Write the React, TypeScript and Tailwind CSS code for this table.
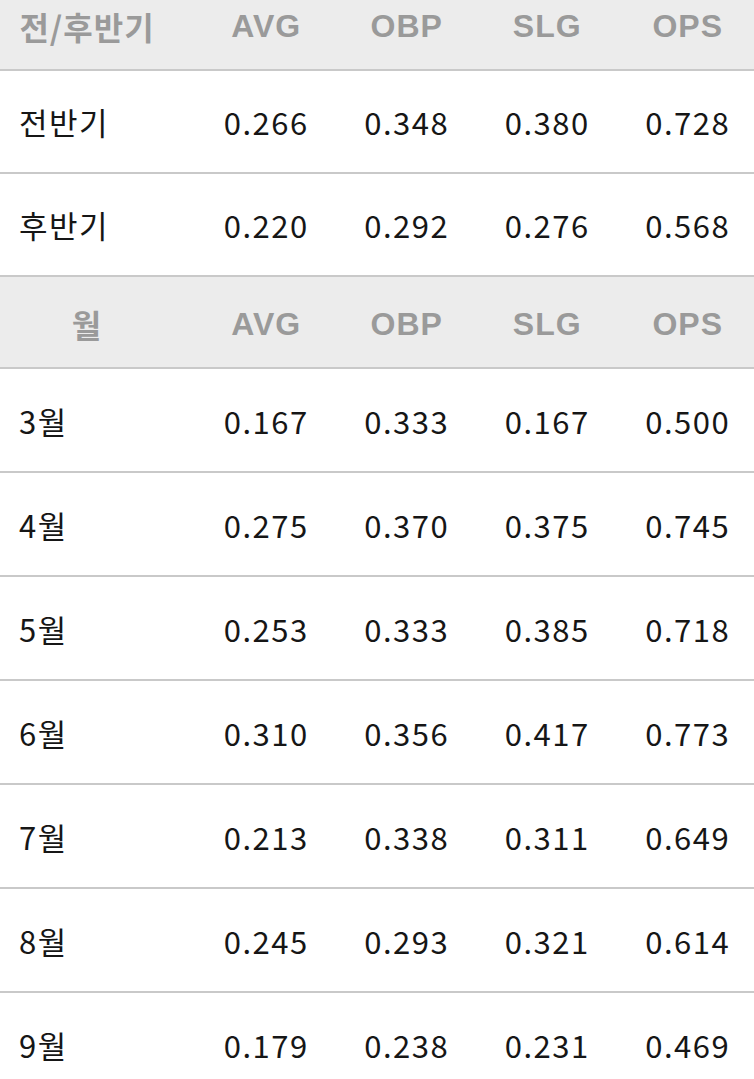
import React from "react";

const half = [
  { label: "전반기", avg: "0.266", obp: "0.348", slg: "0.380", ops: "0.728" },
  { label: "후반기", avg: "0.220", obp: "0.292", slg: "0.276", ops: "0.568" },
];

const months = [
  { label: "3월", avg: "0.167", obp: "0.333", slg: "0.167", ops: "0.500" },
  { label: "4월", avg: "0.275", obp: "0.370", slg: "0.375", ops: "0.745" },
  { label: "5월", avg: "0.253", obp: "0.333", slg: "0.385", ops: "0.718" },
  { label: "6월", avg: "0.310", obp: "0.356", slg: "0.417", ops: "0.773" },
  { label: "7월", avg: "0.213", obp: "0.338", slg: "0.311", ops: "0.649" },
  { label: "8월", avg: "0.245", obp: "0.293", slg: "0.321", ops: "0.614" },
  { label: "9월", avg: "0.179", obp: "0.238", slg: "0.231", ops: "0.469" },
];

type Row = { label: string; avg: string; obp: string; slg: string; ops: string };

function HeaderRow({ label, tall }: { label: string; tall?: boolean }) {
  return (
    <div
      className={
        "grid grid-cols-[196px_repeat(4,140.5px)] items-center border-b-2 border-[#c9c9c9] bg-[#ececec] pt-[4px] font-bold text-[#9a9a9a] " +
        (tall ? "h-[93px]" : "h-[92px]")
      }
    >
      <div className="pr-[22px] text-center font-['Noto_Sans_CJK_KR',sans-serif] text-[32px] tracking-[1px]">
        {label}
      </div>
      {["AVG", "OBP", "SLG", "OPS"].map((h) => (
        <div
          key={h}
          className="text-center font-['Liberation_Sans',Arial,sans-serif] text-[32px] tracking-[1px]"
        >
          {h}
        </div>
      ))}
    </div>
  );
}

function DataRow({ row, tall }: { row: Row; tall?: boolean }) {
  return (
    <div
      className={
        "grid grid-cols-[196px_repeat(4,140.5px)] items-center border-b-2 border-[#c9c9c9] pt-[2px] text-[31px] tracking-[1.5px] text-[#161616] " +
        (tall ? "h-[104px]" : "h-[103px]")
      }
    >
      <div className="pl-[19px]">{row.label}</div>
      <div className="text-center">{row.avg}</div>
      <div className="text-center">{row.obp}</div>
      <div className="text-center">{row.slg}</div>
      <div className="text-center">{row.ops}</div>
    </div>
  );
}

export default function App() {
  return (
    <div className="h-[1079px] w-[754px] overflow-hidden bg-white font-['Noto_Sans_CJK_KR','Noto_Sans',sans-serif]">
      <div className="-mt-[22px]">
        <HeaderRow label="전/후반기" tall />
        {half.map((r) => (
          <DataRow key={r.label} row={r} />
        ))}
        <HeaderRow label="월" />
        {months.map((r) => (
          <DataRow key={r.label} row={r} tall />
        ))}
      </div>
    </div>
  );
}
